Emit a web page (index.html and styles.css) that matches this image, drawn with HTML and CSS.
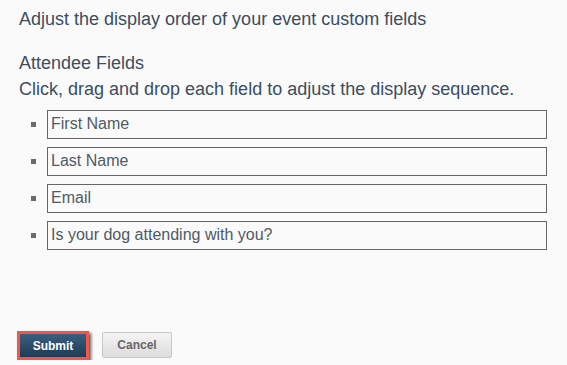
FILE: index.html
```html
<!DOCTYPE html>
<html>
<head>
<meta charset="utf-8">
<link rel="stylesheet" href="styles.css">
</head>
<body>
<div class="page">
  <h1 class="title">Adjust the display order of your event custom fields</h1>
  <h2 class="section">Attendee Fields</h2>
  <p class="hint">Click, drag and drop each field to adjust the display sequence.</p>
  <ul class="fields">
    <li class="field"><span class="bullet"></span><div class="box">First Name</div></li>
    <li class="field"><span class="bullet"></span><div class="box">Last Name</div></li>
    <li class="field"><span class="bullet"></span><div class="box">Email</div></li>
    <li class="field"><span class="bullet"></span><div class="box">Is your dog attending with you?</div></li>
  </ul>
  <div class="actions">
    <button class="btn btn-submit">Submit</button>
    <button class="btn btn-cancel">Cancel</button>
  </div>
</div>
</body>
</html>
```
FILE: styles.css
```css
html, body {
  margin: 0;
  padding: 0;
  background: #fafafa;
}
.page {
  font-family: "Liberation Sans", Arial, sans-serif;
  color: #3a4e5e;
  padding: 8px 20px 0 19px;
}
.title {
  margin: 0;
  font-size: 18px;
  font-weight: normal;
  line-height: 22px;
}
.section {
  margin: 22px 0 0;
  font-size: 18px;
  font-weight: normal;
  line-height: 22px;
}
.hint {
  margin: 4px 0 0;
  font-size: 18px;
  line-height: 22px;
}
.fields {
  list-style: none;
  margin: 10px 0 0;
  padding: 0 0 0 12px;
}
.field {
  display: flex;
  align-items: center;
  margin-bottom: 8px;
  height: 29px;
}
.bullet {
  width: 5px;
  height: 5px;
  background: #6b6b6b;
  margin-right: 11px;
  flex: none;
}
.box {
  box-sizing: border-box;
  width: 500px;
  height: 29px;
  border: 1px solid #666;
  padding: 0 3px;
  font-size: 16px;
  line-height: 25px;
  color: #4f5a64;
}
.actions {
  display: flex;
  align-items: flex-start;
  gap: 13px;
  margin-top: 81px;
  padding-left: 0;
}
.btn {
  font-family: "Liberation Sans", Arial, sans-serif;
  font-weight: bold;
  font-size: 12px;
  cursor: pointer;
  box-sizing: border-box;
}
.btn-submit {
  margin-left: -2px;
  width: 72px;
  height: 29px;
  color: #fff;
  background: linear-gradient(#3a5e7e, #1f3b56);
  border: 3px solid #f0584b;
  box-shadow: 2px 2px 3px rgba(0,0,0,0.65);
}
.btn-cancel {
  margin-top: 1px;
  width: 70px;
  height: 26px;
  color: #666;
  background: linear-gradient(#f4f4f4, #dcdcdc);
  border: 1px solid #c8c8c8;
  border-radius: 2px;
}
```
